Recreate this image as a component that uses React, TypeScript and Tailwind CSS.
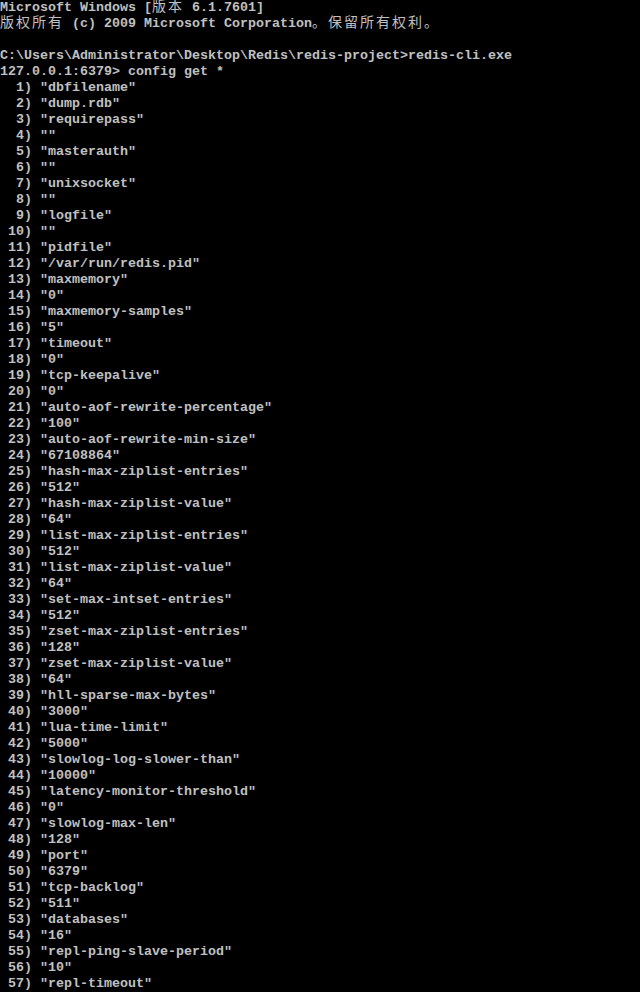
import React from 'react';

const header: string[] = [
  'Microsoft Windows [版本 6.1.7601]',
  '版权所有 (c) 2009 Microsoft Corporation。保留所有权利。',
  '',
  'C:\\Users\\Administrator\\Desktop\\Redis\\redis-project>redis-cli.exe',
  '127.0.0.1:6379> config get *',
];

const values: string[] = [
  'dbfilename', 'dump.rdb', 'requirepass', '', 'masterauth', '', 'unixsocket', '',
  'logfile', '', 'pidfile', '/var/run/redis.pid', 'maxmemory', '0', 'maxmemory-samples', '5',
  'timeout', '0', 'tcp-keepalive', '0', 'auto-aof-rewrite-percentage', '100',
  'auto-aof-rewrite-min-size', '67108864', 'hash-max-ziplist-entries', '512',
  'hash-max-ziplist-value', '64', 'list-max-ziplist-entries', '512', 'list-max-ziplist-value', '64',
  'set-max-intset-entries', '512', 'zset-max-ziplist-entries', '128', 'zset-max-ziplist-value', '64',
  'hll-sparse-max-bytes', '3000', 'lua-time-limit', '5000', 'slowlog-log-slower-than', '10000',
  'latency-monitor-threshold', '0', 'slowlog-max-len', '128', 'port', '6379', 'tcp-backlog', '511',
  'databases', '16', 'repl-ping-slave-period', '10', 'repl-timeout',
];

// split a line into ascii runs and wide (CJK) runs; wide chars take two console cells
const splitRuns = (text: string) => {
  const runs: { wide: boolean; s: string }[] = [];
  for (const ch of Array.from(text)) {
    const wide = ch.charCodeAt(0) > 127;
    const last = runs[runs.length - 1];
    if (last && last.wide === wide) last.s += ch;
    else runs.push({ wide, s: ch });
  }
  return runs;
};

const Line: React.FC<{ text: string }> = ({ text }) => (
  <div className="h-4 whitespace-pre">
    {splitRuns(text).map((r, i) =>
      r.wide ? (
        <span
          key={i}
          className="text-[14px] leading-[0] tracking-[2px] font-normal font-['Noto_Sans_CJK_SC',sans-serif]"
        >
          {r.s}
        </span>
      ) : (
        <React.Fragment key={i}>{r.s}</React.Fragment>
      )
    )}
    {text === '' ? ' ' : null}
  </div>
);

export default function App() {
  const lines = [
    ...header,
    ...values.map((v, i) => `${String(i + 1).padStart(3, ' ')}) "${v}"`),
  ];
  return (
    <div className="w-[640px] h-[992px] overflow-hidden bg-black text-[#c0c0c0] font-['Liberation_Mono',monospace] font-bold text-[13.333px] leading-4">
      {lines.map((l, i) => (
        <Line key={i} text={l} />
      ))}
    </div>
  );
}
